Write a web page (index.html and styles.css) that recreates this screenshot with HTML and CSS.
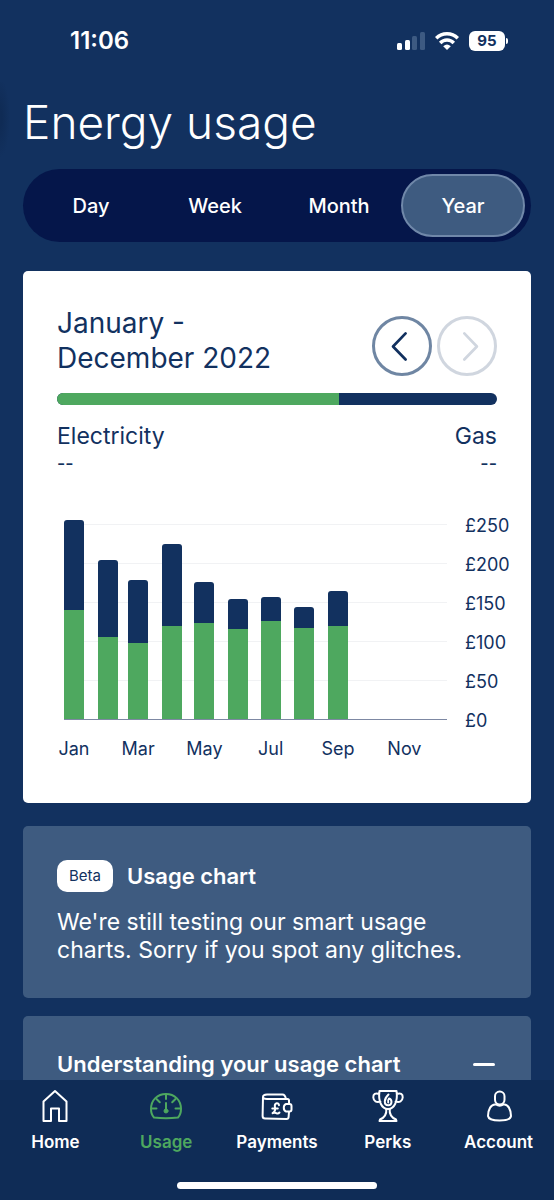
FILE: index.html
```
<!DOCTYPE html>
<html lang="en">
<head>
<meta charset="utf-8">
<meta name="viewport" content="width=device-width, initial-scale=1">
<title>Energy usage</title>
<link rel="stylesheet" href="styles.css">
</head>
<body>
<div class="app">
  <div class="status">
    <span class="status-time">11:06</span>
    <div class="status-icons">
      <svg width="28" height="18" viewBox="0 0 28 18" aria-hidden="true">
        <rect x="0" y="11" width="5" height="7" rx="1.5" fill="#fff"/>
        <rect x="8" y="8" width="5" height="10" rx="1.5" fill="#fff"/>
        <rect x="15" y="4" width="5" height="14" rx="1.5" fill="#3d5a82"/>
        <rect x="23" y="0" width="5" height="18" rx="1.5" fill="#3d5a82"/>
      </svg>
      <svg width="24" height="18" viewBox="0 0 24 18" fill="none" stroke="#fff" stroke-width="3.4" aria-hidden="true">
        <path d="M1.200 6.200C7.200 .2 16.800 .2 22.800 6.200"/>
        <path d="M5.200 11C9 7 15 7 18.800 11"/>
        <path d="M12 18L8.200 14.200Q12 11 15.800 14.200Z" fill="#fff" stroke="none"/>
      </svg>
      <span class="battery">95</span>
    </div>
  </div>

  <main class="content">
    <h1 class="title">Energy usage</h1>

    <div class="segments" role="group" aria-label="Period">
      <button class="segment" type="button">Day</button>
      <button class="segment" type="button">Week</button>
      <button class="segment" type="button">Month</button>
      <button class="segment segment-active" type="button" aria-pressed="true">Year</button>
    </div>

    <section class="card usage">
      <div class="usage-head">
        <h2 class="period">January - December 2022</h2>
        <div class="pager">
          <button class="pager-button" type="button" aria-label="Previous year">
            <svg width="60" height="60" viewBox="0 0 60 60" aria-hidden="true"><path d="M34 16L20 30.500L34 45"/></svg>
          </button>
          <button class="pager-button" type="button" aria-label="Next year" disabled>
            <svg width="60" height="60" viewBox="0 0 60 60" aria-hidden="true"><path d="M27 16L41 30.500L27 45"/></svg>
          </button>
        </div>
      </div>
      <div class="split"><div class="split-electricity" style="width: 64%"></div></div>
      <div class="totals">
        <div class="total"><span>Electricity</span><span class="total-value">--</span></div>
        <div class="total total-gas"><span>Gas</span><span class="total-value">--</span></div>
      </div>

      <div class="chart">
        <div class="plot months">
          <div class="bar"><div class="gas" style="height: 45%"></div><div class="electricity" style="height: 55%"></div></div>
          <div class="bar"><div class="gas" style="height: 39%"></div><div class="electricity" style="height: 41%"></div></div>
          <div class="bar"><div class="gas" style="height: 32%"></div><div class="electricity" style="height: 38%"></div></div>
          <div class="bar"><div class="gas" style="height: 41.500%"></div><div class="electricity" style="height: 46.500%"></div></div>
          <div class="bar"><div class="gas" style="height: 21%"></div><div class="electricity" style="height: 48%"></div></div>
          <div class="bar"><div class="gas" style="height: 15.500%"></div><div class="electricity" style="height: 45%"></div></div>
          <div class="bar"><div class="gas" style="height: 12%"></div><div class="electricity" style="height: 49.500%"></div></div>
          <div class="bar"><div class="gas" style="height: 11%"></div><div class="electricity" style="height: 45.500%"></div></div>
          <div class="bar"><div class="gas" style="height: 18%"></div><div class="electricity" style="height: 46.500%"></div></div>
        </div>
        <div class="y-axis">
          <span>£250</span><span>£200</span><span>£150</span><span>£100</span><span>£50</span><span>£0</span>
        </div>
        <div class="x-axis months">
          <span class="month">Jan</span><span></span>
          <span class="month">Mar</span><span></span>
          <span class="month">May</span><span></span>
          <span class="month">Jul</span><span></span>
          <span class="month">Sep</span><span></span>
          <span class="month">Nov</span><span></span>
        </div>
      </div>
    </section>

    <section class="card panel">
      <div class="panel-head">
        <span class="tag">Beta</span>
        <h2 class="panel-title">Usage chart</h2>
      </div>
      <p class="panel-text">We're still testing our smart usage charts. Sorry if you spot any glitches.</p>
    </section>

    <section class="card panel">
      <button class="accordion" type="button" aria-expanded="true">
        <span class="panel-title">Understanding your usage chart</span>
        <span class="minus"></span>
      </button>
    </section>
  </main>

  <nav class="tabs">
    <div class="tab-list">
      <a class="tab" href="#home">
        <svg class="icon" viewBox="0 0 36 36" aria-hidden="true"><path d="M6.500 13.500L18 3L29.500 13.500V33H22V20.500H14V33H6.500Z"/></svg>
        Home
      </a>
      <a class="tab tab-active" href="#usage" aria-current="page">
        <svg class="icon" viewBox="0 0 36 36" aria-hidden="true">
          <path d="M6 29.500C3.600 27 3 24 3 21C3 12 9.500 6 18 6S33 12 33 21C33 24 32.400 27 30 29.500C22 30.500 14 30.500 6 29.500Z"/>
          <path d="M18 6V11M8.500 11L11.800 14.300M27.500 11L24.200 14.300M3.500 20.500H8.500M27.500 20.500H32.500M18 15V22"/>
          <circle cx="18" cy="23" r="2" fill="currentColor" stroke-width="1"/>
        </svg>
        Usage
      </a>
      <a class="tab" href="#payments">
        <svg class="icon" viewBox="0 0 36 36" aria-hidden="true">
          <path d="M30 16V12.500Q30 11 28.500 11H8Q4 11 4 9Q4 6.500 8 6.500H23.500Q26 6.500 27 11M4 9L3.600 28Q3.600 30.500 6 30.500L27.500 31Q29.500 31 29.600 29L30 24"/>
          <path d="M27 16H30.500Q32.500 16 32.500 18V21.500Q32.500 23.500 30.500 23.500H27Q24.800 22.800 24.800 19.800T27 16Z"/>
          <path d="M20 17.200C19.600 14.200 15.800 14.800 15.800 18C16.800 21.500 15.600 24 13.600 25.200Q15.500 24.200 17.300 25.200T20.500 24.500M13.300 20.500H18.800"/>
        </svg>
        Payments
      </a>
      <a class="tab" href="#perks">
        <svg class="icon" viewBox="0 0 36 36" aria-hidden="true">
          <path d="M9.500 3H26.500C28 13 24.500 21 18 21S8 13 9.500 3ZM9.300 6C5.500 4.500 3 6 3.300 9.500C3.500 13 6.500 14.800 10.400 13.500M26.700 6C30.500 4.500 33 6 32.700 9.500C32.500 13 29.500 14.800 25.600 13.500"/>
          <path d="M16.300 21Q17 28.500 10 31.500L9.500 33H26.500L26 31.500Q19 28.500 19.700 21"/>
          <path d="M18.500 6.500Q14.800 10 14.800 13.500C14.800 18.500 21.300 18.500 21.500 14Q21.400 11 19 10.500Q17.500 12.500 18.200 14.500"/>
        </svg>
        Perks
      </a>
      <a class="tab" href="#account">
        <svg class="icon" viewBox="0 0 36 36" aria-hidden="true">
          <rect x="14" y="3.500" width="9.500" height="13" rx="4.700"/>
          <path d="M15 16.500C10 15.500 7 22 7 28C7.500 31.500 12 32.500 18.500 32.500S29.500 31.500 30 28C30 22 27 15.500 22.500 16.500Q18.700 19 15 16.500Z"/>
        </svg>
        Account
      </a>
    </div>
    <div class="home-indicator"></div>
  </nav>
</div>
</body>
</html>
```
FILE: styles.css
```
:root {
  --navy: #12315f;
  --ink: #12315f;
  --green: #4ea85f;
  --panel: #3e5b80;
}

* {
  box-sizing: border-box;
}

body {
  margin: 0;
  background: var(--navy);
  color: #fff;
  font-family: Inter, "Liberation Sans", sans-serif;
  font-size: 23px;
  line-height: 28px;
}

h1,
h2,
p {
  margin: 0;
  font-weight: 400;
}

button {
  padding: 0;
  border: 0;
  background: none;
  color: inherit;
  font: inherit;
}

.app {
  display: flex;
  flex-direction: column;
  height: 100vh;
}

.status {
  display: flex;
  flex: none;
  align-items: center;
  justify-content: space-between;
  height: 82px;
  padding: 0 46px 0 70px;
}

.status-time {
  font-size: 24px;
  font-weight: 600;
}

.status-icons {
  display: flex;
  align-items: center;
  gap: 10px;
}

.battery {
  position: relative;
  width: 36px;
  height: 20px;
  margin-right: 3px;
  border-radius: 6px;
  background: #fff;
  color: var(--ink);
  font-size: 15px;
  font-weight: 700;
  line-height: 20px;
  text-align: center;
}

.battery::after {
  content: "";
  position: absolute;
  top: 7px;
  right: -3px;
  width: 2px;
  height: 6px;
  border-radius: 0 2px 2px 0;
  background: #fff;
}

.content {
  flex: 1;
  min-height: 0;
  padding: 12px 23px 0;
  background: radial-gradient(10px 40px at 0 36px, #0f2b55 20%, transparent) no-repeat;
  overflow: hidden;
}

.title {
  font-size: 46px;
  font-weight: 300;
  line-height: 56px;
}

.segments {
  display: grid;
  grid-template-columns: repeat(4, 1fr);
  margin: 19px 0 29px;
  padding: 5px 6px;
  border-radius: 37px;
  background: #05164a;
}

.segment {
  height: 63px;
  border-radius: 32px;
  font-size: 20px;
  font-weight: 500;
}

.segment-active {
  border: 2px solid #7088a9;
  background: var(--panel);
}

.card {
  border-radius: 5px;
}

.usage {
  padding: 35px 34px 40px;
  background: #fff;
  color: var(--ink);
}

.usage-head {
  display: flex;
  align-items: flex-end;
  justify-content: space-between;
}

.period {
  max-width: 250px;
  font-size: 28px;
  line-height: 35px;
}

.pager {
  display: flex;
  gap: 5px;
}

.pager-button {
  width: 60px;
  height: 60px;
}

.pager-button svg {
  display: block;
  border: 3px solid #6f86a3;
  border-radius: 50%;
  fill: none;
  stroke: var(--ink);
  stroke-width: 3;
  stroke-linecap: round;
  stroke-linejoin: round;
}

.pager-button:disabled svg {
  border-color: #d0d6df;
  stroke: #d0d6df;
}

.split {
  height: 12px;
  margin: 17px 0;
  border-radius: 6px;
  background: var(--navy);
  overflow: hidden;
}

.split-electricity {
  height: 100%;
  background: var(--green);
}

.totals {
  display: flex;
  justify-content: space-between;
}

.total {
  display: flex;
  flex-direction: column;
}

.total-gas {
  align-items: flex-end;
}

.total-value {
  font-size: 18px;
  font-weight: 500;
}

.chart {
  display: grid;
  grid-template-columns: 1fr 48px;
  column-gap: 18px;
  margin: 28px -16px 0 7px;
  font-size: 18px;
}

.months {
  display: grid;
  grid-template-columns: 31fr 28fr 31fr 30fr 31fr 30fr 31fr 31fr 30fr 31fr 30fr 20px;
}

.plot {
  height: 214px;
  padding-top: 14px;
  border-bottom: 1px solid #7d88a3;
  background: repeating-linear-gradient(to top, transparent 0 38px, #f1f2f4 38px 39px) padding-box;
}

.bar {
  display: flex;
  flex-direction: column;
  justify-content: flex-end;
  width: 20px;
}

.gas {
  border-radius: 3px 3px 0 0;
  background: var(--navy);
}

.electricity {
  background: var(--green);
}

.y-axis {
  display: flex;
  grid-row: 1 / 3;
  grid-column: 2;
  flex-direction: column;
  line-height: 39px;
}

.x-axis {
  padding-top: 15px;
}

.month {
  display: flex;
  justify-content: center;
  width: 20px;
}

.panel {
  margin-top: 23px;
  padding: 34px;
  background: var(--panel);
}

.panel + .panel {
  margin-top: 18px;
}

.panel-head {
  display: flex;
  align-items: center;
  gap: 14px;
  margin-bottom: 16px;
}

.tag {
  padding: 2px 12px;
  border-radius: 10px;
  background: #fff;
  color: var(--ink);
  font-size: 15px;
}

.panel-title {
  font-size: 22px;
  font-weight: 600;
}

.panel-text {
  max-width: 420px;
}

.accordion {
  display: flex;
  align-items: center;
  justify-content: space-between;
  width: 100%;
}

.minus {
  width: 22px;
  height: 3px;
  margin-right: 2px;
  border-radius: 2px;
  background: #fff;
}

.tabs {
  display: flex;
  flex: none;
  flex-direction: column;
  height: 120px;
  padding: 8px 0 11px;
  background: #0f2c56;
}

.tab-list {
  display: grid;
  grid-template-columns: repeat(5, 1fr);
}

.tab {
  display: flex;
  flex-direction: column;
  align-items: center;
  gap: 4px;
  color: #fff;
  font-size: 17px;
  font-weight: 600;
  text-decoration: none;
}

.tab-active {
  color: var(--green);
}

.icon {
  width: 36px;
  height: 36px;
  fill: none;
  stroke: currentColor;
  stroke-width: 2;
  stroke-linecap: round;
  stroke-linejoin: round;
}

.home-indicator {
  width: 36%;
  height: 7px;
  margin: auto auto 0;
  border-radius: 4px;
  background: #fff;
}
```
